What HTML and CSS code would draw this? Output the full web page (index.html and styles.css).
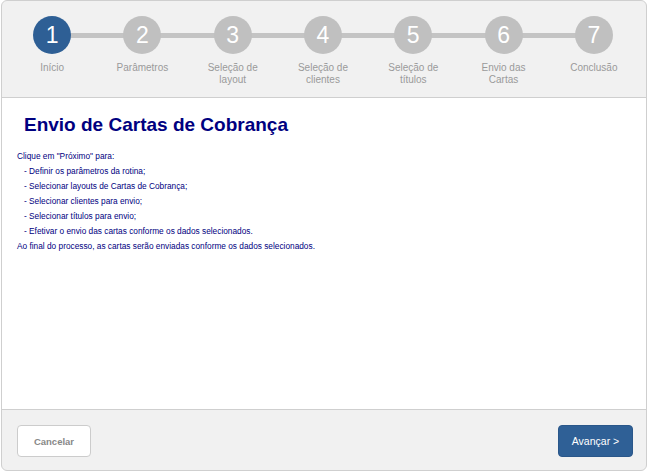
FILE: index.html
```html
<!DOCTYPE html>
<html lang="pt-BR">
<head>
  <meta charset="UTF-8">
  <title>Envio de Cartas de Cobrança</title>
  <link rel="stylesheet" href="styles.css">
</head>
<body>
<div class="wizard">
  <div class="steps">
    <div class="step active"><span class="circle">1</span><span class="label">Início</span></div>
    <div class="step"><span class="circle">2</span><span class="label">Parâmetros</span></div>
    <div class="step"><span class="circle">3</span><span class="label">Seleção de<br>layout</span></div>
    <div class="step"><span class="circle">4</span><span class="label">Seleção de<br>clientes</span></div>
    <div class="step"><span class="circle">5</span><span class="label">Seleção de<br>títulos</span></div>
    <div class="step"><span class="circle">6</span><span class="label">Envio das<br>Cartas</span></div>
    <div class="step"><span class="circle">7</span><span class="label">Conclusão</span></div>
  </div>

  <div class="content">
    <h1>Envio de Cartas de Cobrança</h1>
    <p>Clique em "Próximo" para:</p>
    <p class="item">- Definir os parâmetros da rotina;</p>
    <p class="item">- Selecionar layouts de Cartas de Cobrança;</p>
    <p class="item">- Selecionar clientes para envio;</p>
    <p class="item">- Selecionar títulos para envio;</p>
    <p class="item">- Efetivar o envio das cartas conforme os dados selecionados.</p>
    <p>Ao final do processo, as cartas serão enviadas conforme os dados selecionados.</p>
  </div>

  <div class="footer">
    <button class="btn cancel">Cancelar</button>
    <button class="btn next">Avançar &gt;</button>
  </div>
</div>
</body>
</html>
```

FILE: styles.css
```css
body {
  margin: 0;
  padding: 0 3px 2px 1px;
  font-family: "Liberation Sans", Arial, sans-serif;
}

.wizard {
  border: 1px solid #cfcfcf;
  border-radius: 6px;
  overflow: hidden;
  background-color: #f1f1f1;
}

/* steps header */
.steps {
  display: flex;
  padding: 15px 7px 0 5px;
  height: 81px;
  border-bottom: 1px solid #cfcfcf;
}

.step {
  flex: 1;
  position: relative;
  display: flex;
  flex-direction: column;
  align-items: center;
}

.step + .step::before {
  content: "";
  position: absolute;
  top: 17px;
  left: -50%;
  width: 100%;
  height: 5px;
  background-color: #c4c4c4;
}

.circle {
  position: relative;
  z-index: 1;
  width: 38px;
  height: 38px;
  border-radius: 50%;
  background-color: #c0c0c0;
  color: #fff;
  font-size: 23px;
  line-height: 38px;
  text-align: center;
}

.step.active .circle {
  background-color: #2e5f95;
}

.label {
  margin-top: 8px;
  font-size: 10px;
  line-height: 12px;
  color: #9a9a9a;
  text-align: center;
}

/* main content */
.content {
  background-color: #fff;
  height: 311px;
  padding: 0 15px;
  border-bottom: 1px solid #cfcfcf;
  color: #000080;
}

.content h1 {
  margin: 0 0 0 7px;
  padding-top: 15px;
  font-size: 19px;
  line-height: 24px;
  font-weight: bold;
}

.content h1 + p {
  margin-top: 12px;
}

.content p {
  margin: 0;
  font-size: 8.3px;
  line-height: 15px;
}

.content .item {
  padding-left: 7px;
}

/* footer */
.footer {
  display: flex;
  justify-content: space-between;
  padding: 15px 13px 13px 15px;
}

.btn {
  height: 32px;
  padding: 0;
  border-radius: 4px;
  font-family: "Liberation Sans", Arial, sans-serif;
  cursor: pointer;
}

.cancel {
  width: 74px;
  background-color: #fff;
  border: 1px solid #ccc;
  color: #888;
  font-size: 9.5px;
  font-weight: bold;
}

.next {
  width: 75px;
  background-color: #2f6096;
  border: 1px solid #2a578a;
  color: #fff;
  font-size: 10.5px;
}
```
